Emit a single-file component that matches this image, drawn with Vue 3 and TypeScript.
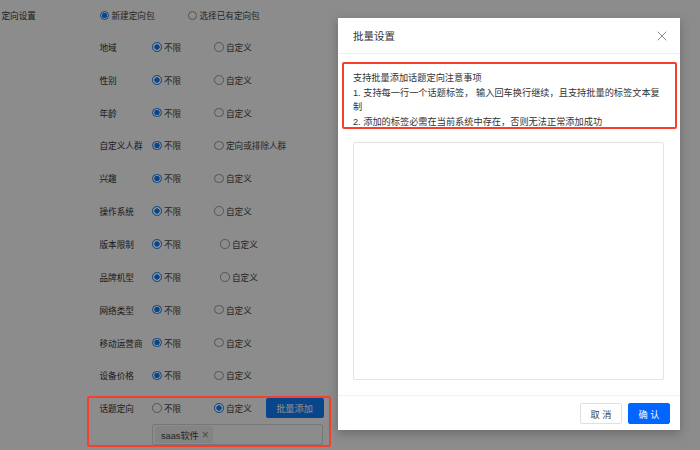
<script setup lang="ts">
interface TargetRow {
  label: string
  custom: string
  wide?: boolean
}

const rows: TargetRow[] = [
  { label: '地域', custom: '自定义' },
  { label: '性别', custom: '自定义' },
  { label: '年龄', custom: '自定义' },
  { label: '自定义人群', custom: '定向或排除人群' },
  { label: '兴趣', custom: '自定义' },
  { label: '操作系统', custom: '自定义' },
  { label: '版本限制', custom: '自定义', wide: true },
  { label: '品牌机型', custom: '自定义', wide: true },
  { label: '网络类型', custom: '自定义' },
  { label: '移动运营商', custom: '自定义' },
  { label: '设备价格', custom: '自定义' },
]
</script>

<template>
  <div class="page">
    <div class="form">
      <div class="head-row">
        <span class="head-label">定向设置</span>
        <span class="radio on pack-new"><i></i>新建定向包</span>
        <span class="radio"><i></i>选择已有定向包</span>
      </div>

      <div v-for="row in rows" :key="row.label" class="row">
        <span class="label">{{ row.label }}</span>
        <span class="radio on first" :class="{ wide: row.wide }"><i></i>不限</span>
        <span class="radio"><i></i>{{ row.custom }}</span>
      </div>

      <div class="row topic">
        <span class="label">话题定向</span>
        <span class="radio first"><i></i>不限</span>
        <span class="radio on topic-custom"><i></i>自定义</span>
        <button class="bulk-btn" type="button">批量添加</button>
      </div>
      <div class="tag-box">
        <span class="tag">saas软件<b>×</b></span>
      </div>
    </div>

    <div class="mask"></div>
    <div class="mark mark-topic"></div>

    <div class="modal">
      <div class="modal-head">
        <span>批量设置</span>
        <svg width="10" height="10" viewBox="0 0 10 10" fill="none">
          <path d="M.7.7l8.6 8.6M9.3.7L.7 9.3" stroke="#8c8c8c" stroke-width="1" />
        </svg>
      </div>
      <div class="modal-body">
        <div class="notes">
          <p>支持批量添加话题定向注意事项</p>
          <p>1. 支持每一行一个话题标签， 输入回车换行继续，且支持批量的标签文本复制</p>
          <p>2. 添加的标签必需在当前系统中存在，否则无法正常添加成功</p>
        </div>
        <div class="text-area"></div>
      </div>
      <div class="modal-foot">
        <button class="btn" type="button">取 消</button>
        <button class="btn primary" type="button">确 认</button>
      </div>
      <div class="mark mark-notes"></div>
    </div>
  </div>
</template>

<style>
html,
body {
  margin: 0;
  background: #8c8c8c;
}
</style>

<style scoped>
.page {
  position: relative;
  width: 700px;
  height: 450px;
  overflow: hidden;
  background: #fff;
  font-family: 'Liberation Sans', 'Noto Sans CJK SC', sans-serif;
  font-size: 8.6px;
  color: #333;
}

.form {
  padding-left: 1.5px;
}

.head-row {
  display: flex;
  align-items: center;
  height: 30.5px;
}

.head-label {
  width: 98px;
}

.pack-new {
  width: 88px;
}

.row {
  display: flex;
  align-items: center;
  height: 32.85px;
  padding-left: 98px;
}

.label {
  width: 52.5px;
  white-space: nowrap;
}

.first {
  width: 62px;
}

.first.wide {
  width: 68px;
}

.radio {
  display: inline-flex;
  align-items: center;
  gap: 2.5px;
  white-space: nowrap;
  color: #444;
}

.radio i {
  box-sizing: border-box;
  width: 9.5px;
  height: 9.5px;
  border: 1px solid #999;
  border-radius: 50%;
  background: #fff;
  flex-shrink: 0;
}

.radio.on i {
  border-color: #1080ff;
  background: radial-gradient(circle, #1080ff 0 2.4px, #fff 2.9px);
}

.topic-custom {
  width: 51.5px;
}

.bulk-btn {
  width: 58px;
  height: 20px;
  padding: 0;
  border: 0;
  border-radius: 2px;
  background: #1080ff;
  color: #fff;
  font: inherit;
  font-size: 9.2px;
}

.tag-box {
  display: flex;
  align-items: center;
  box-sizing: border-box;
  width: 171px;
  height: 21px;
  margin: -0.5px 0 0 150.5px;
  padding: 0 2px;
  border: 1px solid #d9d9d9;
  border-radius: 2px;
}

.tag {
  display: flex;
  align-items: center;
  gap: 3px;
  height: 17px;
  padding: 0 4px 0 6px;
  border-radius: 2px;
  background: #f0f0f0;
  color: #444;
  font-size: 9.2px;
}

.tag b {
  font-weight: 400;
  font-size: 12px;
  color: #888;
}

.mask {
  position: absolute;
  inset: 0;
  background: rgba(0, 0, 0, 0.45);
}

.mark {
  position: absolute;
  box-sizing: border-box;
  border: 2px solid #f5402f;
  border-radius: 2px;
}

.mark-topic {
  left: 87px;
  top: 396px;
  width: 244px;
  height: 51px;
}

.modal {
  position: absolute;
  left: 338px;
  top: 18px;
  width: 342px;
  height: 412px;
  display: flex;
  flex-direction: column;
  background: #fff;
  box-shadow: 0 3px 10px rgba(0, 0, 0, 0.25);
  font-size: 9.2px;
}

.modal-head {
  display: flex;
  align-items: center;
  justify-content: space-between;
  box-sizing: border-box;
  height: 36px;
  padding: 0 13px 0 15px;
  border-bottom: 1px solid #f0f0f0;
  font-size: 10.5px;
  color: #333;
}

.modal-body {
  flex: 1;
  padding: 17px 16px 15px 15px;
  display: flex;
  flex-direction: column;
}

.notes {
  height: 59px;
  margin-bottom: 12px;
  line-height: 14.7px;
  color: #333;
}

.notes p {
  margin: 0;
}

.text-area {
  flex: 1;
  border: 1px solid #e4e4e4;
  border-radius: 2px;
}

.modal-foot {
  display: flex;
  justify-content: flex-end;
  gap: 6px;
  box-sizing: border-box;
  height: 35px;
  padding: 7px 10px 0 0;
  border-top: 1px solid #f0f0f0;
}

.btn {
  width: 42px;
  height: 21px;
  padding: 0;
  border: 1px solid #e0e0e0;
  border-radius: 2px;
  background: #fff;
  color: #444;
  font: inherit;
}

.btn.primary {
  border-color: #0066ff;
  background: #0066ff;
  color: #fff;
}

.mark-notes {
  left: 4px;
  top: 44px;
  width: 335px;
  height: 67px;
}
</style>
